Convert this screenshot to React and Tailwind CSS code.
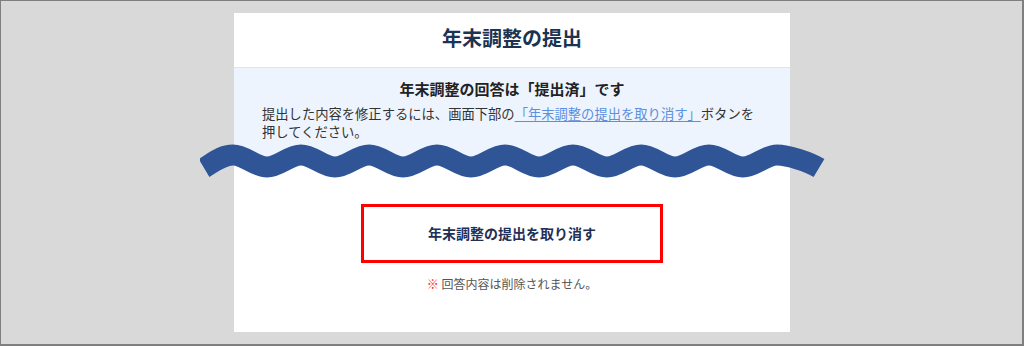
import React from "react";

const font = { fontFamily: '"Noto Sans CJK JP", "Noto Sans", sans-serif' };

const Wave = () => {
  // page coordinates, viewBox matches the svg's place on the page
  let d = "M 204 168 C 214 162, 222 155, 233 155";
  let x = 233;
  for (let i = 0; i < 8; i++) {
    d += ` C ${x + 12} 155, ${x + 22} 167, ${x + 34} 167`;
    d += ` C ${x + 46} 167, ${x + 56} 155, ${x + 68} 155`;
    x += 68;
  }
  d += ` C ${x + 11} 155, ${x + 32} 162, ${x + 42} 168`;
  return (
    <svg
      className="absolute left-[-34px] top-[127px]"
      width="630"
      height="44"
      viewBox="200 140 630 44"
    >
      <path d={d} fill="none" stroke="#2f5597" strokeWidth="21" strokeLinecap="butt" />
    </svg>
  );
};

const App = () => {
  return (
    <div
      style={font}
      className="w-[1024px] h-[346px] box-border bg-[#d9d9d9] border-t border-l border-r-2 border-b-2 border-[#7f7f7f] pl-[233px] pt-[12px]"
    >
      <div className="relative w-[556px] h-[319px] bg-white flex flex-col">
        {/* タイトル */}
        <div className="h-[55px] border-b border-[#e3e3e3] flex items-center justify-center pb-[4px]">
          <h1 className="text-[20px] leading-[24px] font-bold text-[#1c3352]">年末調整の提出</h1>
        </div>

        {/* 提出済メッセージ */}
        <div className="h-[92px] bg-[#edf4fd] pt-[11px] pl-[28px]">
          <p className="text-[15px] leading-[20px] font-bold text-[#222] text-center pr-[28px]">
            年末調整の回答は「提出済」です
          </p>
          <p className="mt-[6px] text-[13.3px] leading-[18px] text-[#333]">
            提出した内容を修正するには、画面下部の
            <span className="text-[#5b8fdf] underline underline-offset-2">「年末調整の提出を取り消す」</span>
            ボタンを
            <br />
            押してください。
          </p>
        </div>

        {/* 取り消しボタン */}
        <div className="flex flex-col items-center pt-[44px]">
          <div className="w-[302px] h-[59px] border-[3px] border-[#ff0000] flex items-center justify-center">
            <span className="text-[14px] font-bold text-[#1f2f56]">年末調整の提出を取り消す</span>
          </div>
          <p className="mt-[13px] text-[12px] leading-[16px] text-[#555]">
            <span className="text-[#ff2020]">※</span>&nbsp;回答内容は削除されません。
          </p>
        </div>

        <Wave />
      </div>
    </div>
  );
};

export default App;
